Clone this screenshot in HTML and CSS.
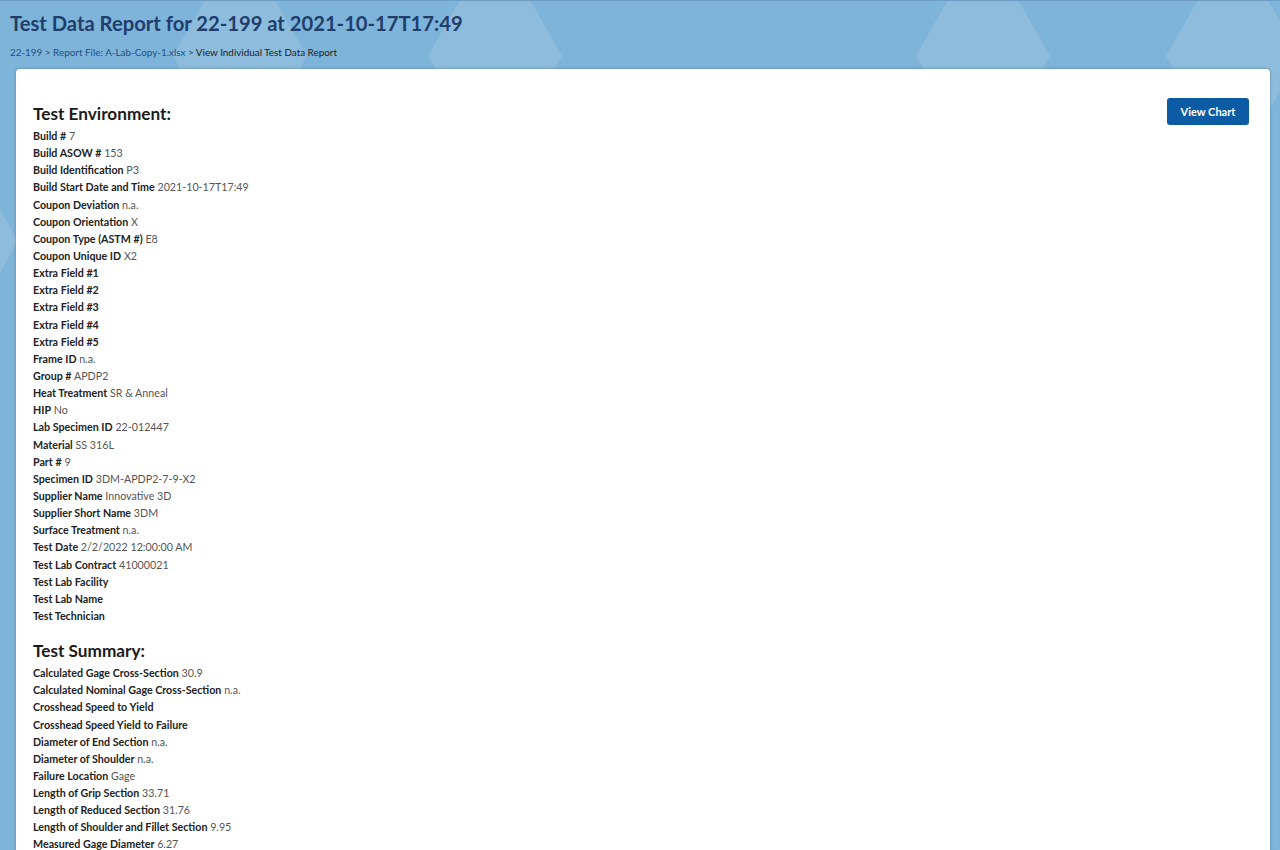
FILE: index.html
```html
<!DOCTYPE html>
<html lang="en">
<head>
<meta charset="utf-8">
<title>Test Data Report for 22-199 at 2021-10-17T17:49</title>
<link rel="stylesheet" href="styles.css">
</head>
<body>
<svg class="hex-bg" width="1280" height="900" viewBox="0 0 1280 900" aria-hidden="true">
  <g fill="#8dbcdd">
    <polygon points="173,55 206,-3 274,-3 307,55 274,113 206,113"/>
    <polygon points="428,55 461,-3 529,-3 562,55 529,113 461,113"/>
    <polygon points="916,55 949,-3 1017,-3 1050,55 1017,113 949,113"/>
    <polygon points="1166,55 1199,-3 1267,-3 1300,55 1267,113 1199,113"/>
    <polygon points="-116,240 -83,182 -15,182 18,240 -15,298 -83,298"/>
    <polygon points="1262,880 1295,822 1363,822 1396,880 1363,938 1295,938"/>
  </g>
</svg>

<header class="page-head">
  <h1 class="page-title">Test Data Report for 22-199 at 2021-10-17T17:49</h1>
  <nav class="crumbs">
    <a href="#" class="crumb-link">22-199</a> &gt; <a href="#" class="crumb-link">Report File: A-Lab-Copy-1.xlsx</a> &gt; <span class="crumb-current">View Individual Test Data Report</span>
  </nav>
</header>

<main class="card">
  <div class="report">
    <section class="group">
      <h2 class="group-title">Test Environment:</h2>
      <div class="row"><span class="k">Build #</span> <span class="v">7</span></div>
      <div class="row"><span class="k">Build ASOW #</span> <span class="v">153</span></div>
      <div class="row"><span class="k">Build Identification</span> <span class="v">P3</span></div>
      <div class="row"><span class="k">Build Start Date and Time</span> <span class="v">2021-10-17T17:49</span></div>
      <div class="row"><span class="k">Coupon Deviation</span> <span class="v">n.a.</span></div>
      <div class="row"><span class="k">Coupon Orientation</span> <span class="v">X</span></div>
      <div class="row"><span class="k">Coupon Type (ASTM #)</span> <span class="v">E8</span></div>
      <div class="row"><span class="k">Coupon Unique ID</span> <span class="v">X2</span></div>
      <div class="row"><span class="k">Extra Field #1</span></div>
      <div class="row"><span class="k">Extra Field #2</span></div>
      <div class="row"><span class="k">Extra Field #3</span></div>
      <div class="row"><span class="k">Extra Field #4</span></div>
      <div class="row"><span class="k">Extra Field #5</span></div>
      <div class="row"><span class="k">Frame ID</span> <span class="v">n.a.</span></div>
      <div class="row"><span class="k">Group #</span> <span class="v">APDP2</span></div>
      <div class="row"><span class="k">Heat Treatment</span> <span class="v">SR &amp; Anneal</span></div>
      <div class="row"><span class="k">HIP</span> <span class="v">No</span></div>
      <div class="row"><span class="k">Lab Specimen ID</span> <span class="v">22-012447</span></div>
      <div class="row"><span class="k">Material</span> <span class="v">SS 316L</span></div>
      <div class="row"><span class="k">Part #</span> <span class="v">9</span></div>
      <div class="row"><span class="k">Specimen ID</span> <span class="v">3DM-APDP2-7-9-X2</span></div>
      <div class="row"><span class="k">Supplier Name</span> <span class="v">Innovative 3D</span></div>
      <div class="row"><span class="k">Supplier Short Name</span> <span class="v">3DM</span></div>
      <div class="row"><span class="k">Surface Treatment</span> <span class="v">n.a.</span></div>
      <div class="row"><span class="k">Test Date</span> <span class="v">2/2/2022 12:00:00 AM</span></div>
      <div class="row"><span class="k">Test Lab Contract</span> <span class="v">41000021</span></div>
      <div class="row"><span class="k">Test Lab Facility</span></div>
      <div class="row"><span class="k">Test Lab Name</span></div>
      <div class="row"><span class="k">Test Technician</span></div>
    </section>

    <section class="group">
      <h2 class="group-title">Test Summary:</h2>
      <div class="row"><span class="k">Calculated Gage Cross-Section</span> <span class="v">30.9</span></div>
      <div class="row"><span class="k">Calculated Nominal Gage Cross-Section</span> <span class="v">n.a.</span></div>
      <div class="row"><span class="k">Crosshead Speed to Yield</span></div>
      <div class="row"><span class="k">Crosshead Speed Yield to Failure</span></div>
      <div class="row"><span class="k">Diameter of End Section</span> <span class="v">n.a.</span></div>
      <div class="row"><span class="k">Diameter of Shoulder</span> <span class="v">n.a.</span></div>
      <div class="row"><span class="k">Failure Location</span> <span class="v">Gage</span></div>
      <div class="row"><span class="k">Length of Grip Section</span> <span class="v">33.71</span></div>
      <div class="row"><span class="k">Length of Reduced Section</span> <span class="v">31.76</span></div>
      <div class="row"><span class="k">Length of Shoulder and Fillet Section</span> <span class="v">9.95</span></div>
      <div class="row"><span class="k">Measured Gage Diameter</span> <span class="v">6.27</span></div>
    </section>
  </div>
  <button class="btn-chart" type="button">View Chart</button>
</main>
</body>
</html>
```
FILE: styles.css
```css
html, body {
  margin: 0;
  padding: 0;
}
body {
  position: relative;
  background: #7eb4da;
  border-top: 1px solid #6c9cc3;
  font-family: Lato, "Open Sans", sans-serif;
  color: #222;
  overflow: hidden;
  height: 849px;
}
.hex-bg {
  position: absolute;
  top: 0;
  left: 0;
  z-index: 0;
}
.page-head {
  position: relative;
  z-index: 1;
  padding: 10px 0 0 10px;
}
.page-title {
  margin: 0;
  font-size: 20.2px;
  line-height: 24px;
  font-weight: 700;
  color: #1f3e6b;
}
.crumbs {
  margin-top: 10px;
  font-size: 9.9px;
  line-height: 14px;
  color: #2a4768;
}
.crumb-link {
  color: #24507e;
  text-decoration: none;
}
.crumb-current {
  color: #222;
}
.card {
  position: relative;
  z-index: 1;
  margin: 10px 10px 0 16px;
  background: #fff;
  border-radius: 4px;
  box-shadow: 0 0 3px rgba(0, 0, 0, 0.3);
  padding: 29px 21px 20px 17px;
  display: flex;
  justify-content: space-between;
  align-items: flex-start;
  min-height: 900px;
}
.report {
  padding-top: 5px;
}
.group + .group {
  margin-top: 16px;
}
.group-title {
  margin: 0 0 2px;
  font-size: 17.2px;
  line-height: 22px;
  font-weight: 700;
  color: #1b1b1b;
}
.row {
  font-size: 10.7px;
  line-height: 17.14px;
  white-space: nowrap;
}
.k {
  font-weight: 700;
  color: #222;
}
.v {
  color: #555;
}
.btn-chart {
  width: 82px;
  height: 27px;
  border: 0;
  border-radius: 3px;
  background: #0b5ca4;
  color: #fff;
  font-family: Lato, "Open Sans", sans-serif;
  font-size: 11px;
  font-weight: 700;
  padding: 0;
  cursor: pointer;
}
```
